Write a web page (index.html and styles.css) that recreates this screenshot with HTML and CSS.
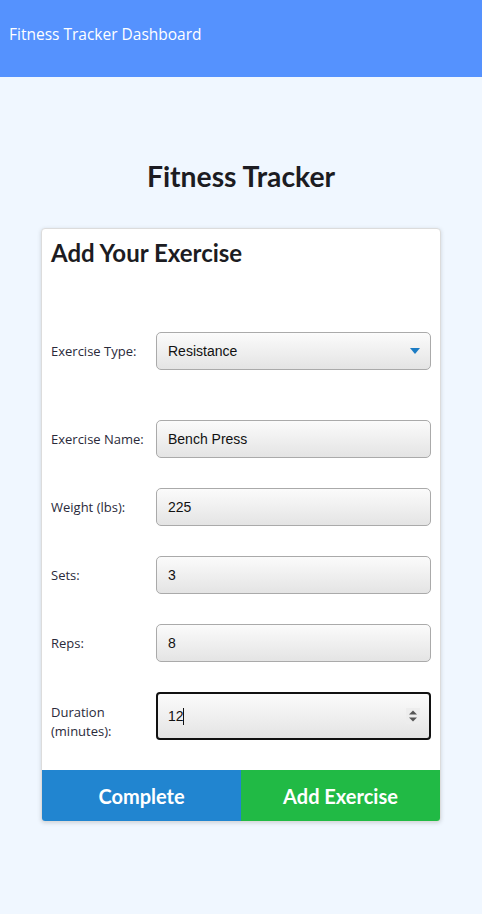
FILE: index.html
```html
<!DOCTYPE html>
<html lang="en">
<head>
<meta charset="utf-8">
<title>Fitness Tracker</title>
<link rel="stylesheet" href="styles.css">
</head>
<body>
<header class="topbar">Fitness Tracker Dashboard</header>
<main class="page">
  <h1 class="title">Fitness Tracker</h1>
  <section class="card">
    <h2 class="card-title">Add Your Exercise</h2>
    <form class="form">
      <div class="row row-type">
        <label class="label">Exercise Type:</label>
        <div class="field">
          <select class="control select">
            <option>Resistance</option>
          </select>
          <svg class="select-arrow" width="10" height="6" viewBox="0 0 10 6"><path d="M0 0H10L5 6Z" fill="#1c7cc4"/></svg>
        </div>
      </div>
      <div class="row">
        <label class="label">Exercise Name:</label>
        <div class="field"><input class="control" type="text" value="Bench Press"></div>
      </div>
      <div class="row">
        <label class="label">Weight (lbs):</label>
        <div class="field"><input class="control" type="text" value="225"></div>
      </div>
      <div class="row">
        <label class="label">Sets:</label>
        <div class="field"><input class="control" type="text" value="3"></div>
      </div>
      <div class="row">
        <label class="label">Reps:</label>
        <div class="field"><input class="control" type="text" value="8"></div>
      </div>
      <div class="row row-tall">
        <label class="label label-low">Duration (minutes):</label>
        <div class="field">
          <input class="control control-focus" type="text" value="12">
          <span class="caret"></span>
          <span class="spinner">
            <svg width="10" height="14" viewBox="0 0 10 14"><path d="M1 5.5L5 1.5L9 5.5Z" fill="#555"/><path d="M1 8.5L5 12.5L9 8.5Z" fill="#555"/></svg>
          </span>
        </div>
      </div>
    </form>
    <div class="actions">
      <button class="btn btn-blue" type="button">Complete</button>
      <button class="btn btn-green" type="button">Add Exercise</button>
    </div>
  </section>
</main>
</body>
</html>
```

FILE: styles.css
```css
* { box-sizing: border-box; }
html, body { margin: 0; padding: 0; }
body {
  background: #f0f7ff;
  font-family: "Open Sans", "Noto Sans", sans-serif;
  color: #222;
  min-height: 914px;
}
.topbar {
  height: 77px;
  background: #5592fe;
  color: #fff;
  font-size: 15.5px;
  line-height: 22px;
  padding: 23px 9px 0;
}
.page {
  display: flex;
  flex-direction: column;
  align-items: center;
}
.title {
  font-family: Lato, sans-serif;
  font-weight: 700;
  font-size: 28.3px;
  line-height: 34px;
  margin: 82px 0 0;
  color: #1c1c22;
}
.card {
  margin-top: 35px;
  width: 400px;
  background: #fff;
  border: 1px solid #dcdcdc;
  border-radius: 4px;
  box-shadow: 0 1px 4px rgba(0, 0, 0, 0.15);
  overflow: hidden;
}
.card-title {
  font-family: Lato, sans-serif;
  font-weight: 700;
  font-size: 24px;
  line-height: 28px;
  margin: 0;
  padding: 10px 9px 0;
  color: #1c1c22;
}
.form {
  display: flex;
  flex-direction: column;
  gap: 30px;
  padding: 65px 9px 30px 9px;
}
.row {
  display: flex;
  align-items: center;
  height: 38px;
}
.row-type { margin-bottom: 20px; }
.row-tall { height: 48px; }
.label {
  width: 105px;
  flex: none;
  font-size: 13px;
  line-height: 19px;
  color: #2a2a3a;
  padding-right: 8px;
}
.label-low { margin-top: 11px; }
.field {
  position: relative;
  flex: 1;
  height: 100%;
}
.control {
  display: block;
  width: 100%;
  height: 100%;
  margin: 0;
  border: 1px solid #aaa;
  border-radius: 5px;
  background: linear-gradient(#fbfbfb, #e4e4e4);
  font-family: "Liberation Sans", Arial, sans-serif;
  font-size: 14px;
  color: #111;
  padding: 0 11px;
  outline: none;
}
.select {
  appearance: none;
  -webkit-appearance: none;
}
.select-arrow {
  position: absolute;
  right: 11px;
  top: 16px;
}
.control-focus {
  border: 2px solid #111;
  border-radius: 4px;
  padding-left: 10px;
}
.caret {
  position: absolute;
  left: 27px;
  top: 16px;
  width: 1px;
  height: 17px;
  background: #111;
}
.spinner {
  position: absolute;
  right: 11px;
  top: 16px;
  width: 14px;
  height: 16px;
  background: #ededed;
  display: flex;
  align-items: center;
  justify-content: center;
}
.actions {
  display: flex;
}
.btn {
  flex: 1;
  height: 51px;
  border: none;
  margin: 0;
  color: #fff;
  font-family: Lato, sans-serif;
  font-weight: 700;
  font-size: 20px;
  cursor: pointer;
}
.btn-blue { background: #2185d0; }
.btn-green { background: #21ba45; }
```
